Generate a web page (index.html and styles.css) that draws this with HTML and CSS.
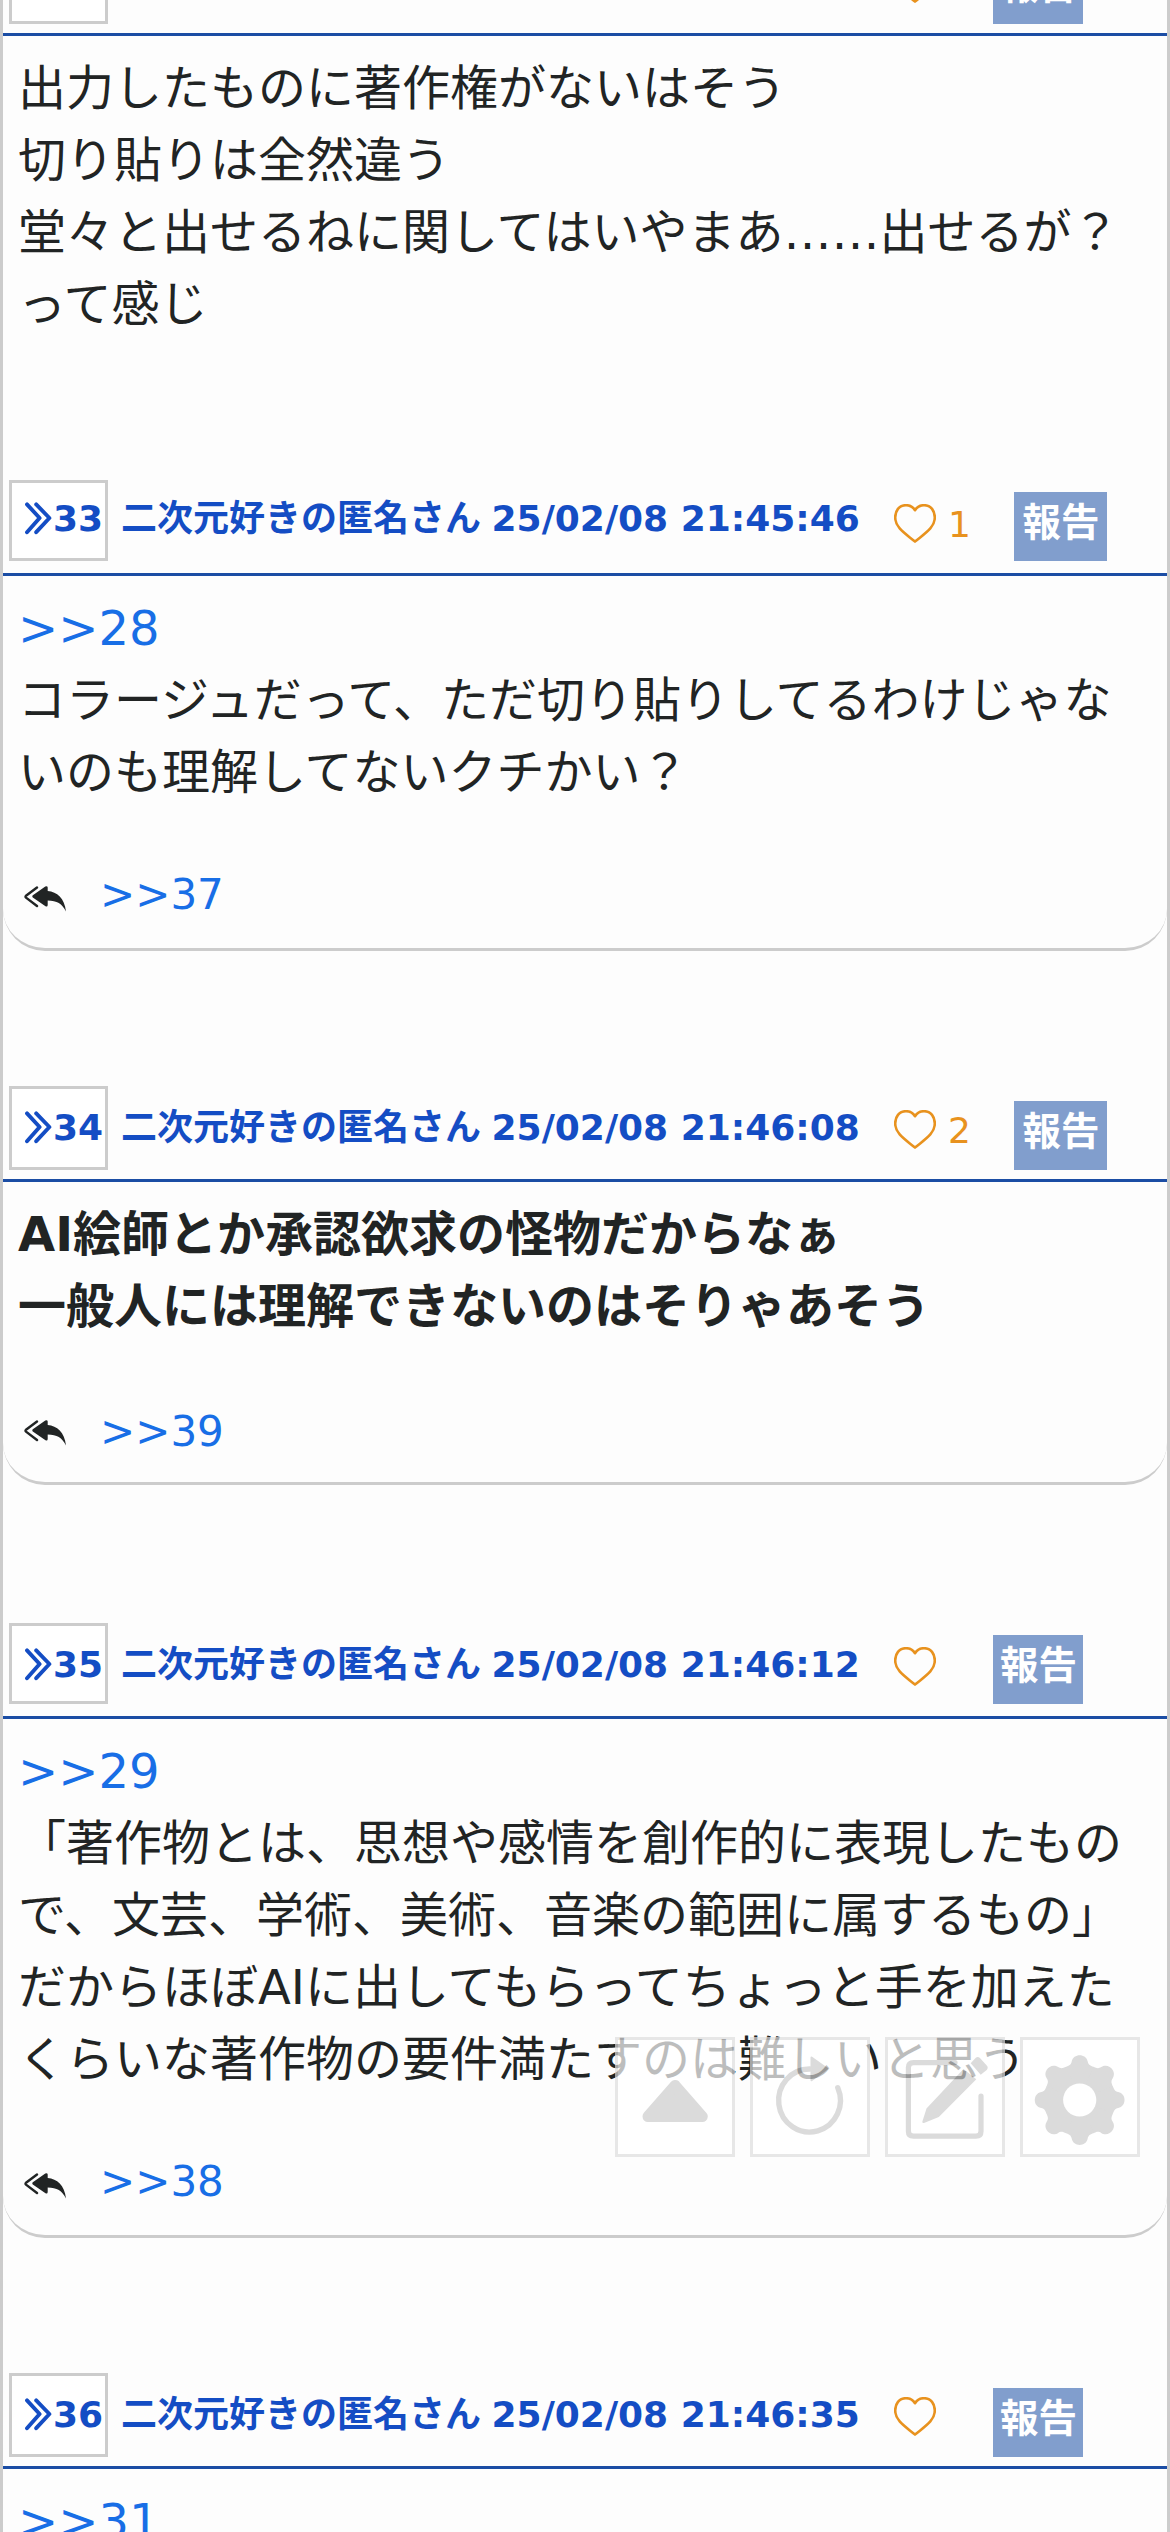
FILE: index.html
```html
<!DOCTYPE html>
<html lang="ja">
<head>
<meta charset="utf-8">
<title>スレッド</title>
<link rel="stylesheet" href="styles.css">
</head>
<body>
<svg class="defs" aria-hidden="true">
  <symbol id="chevrons" viewBox="0 0 28 34"><path d="M3 3.4 15.6 17 3 31.2M12.2 3.4 25.4 17 12.2 31.2" fill="none" stroke="currentColor" stroke-width="3.9" stroke-linecap="round" stroke-linejoin="round"/></symbol>
  <symbol id="heart" viewBox="0 0 42 39"><path d="M21 6.2C18.5 2.2 15.5 1.2 12 1.2 5 1.2 1.2 7 1.2 13.5 1.2 24 12 30 21 37.6 30 30 40.8 24 40.8 13.5 40.8 7 37 1.2 30 1.2 26.5 1.2 23.5 2.2 21 6.2Z" fill="none" stroke="currentColor" stroke-width="2.6" stroke-linejoin="round"/></symbol>
  <symbol id="replies" viewBox="0 0 42 26"><path d="M13 1.5 2 9.8Q1 10.7 2 11.6L13 20" fill="none" stroke="currentColor" stroke-width="2.4" stroke-linecap="round"/><path d="M8.8 9.2 21.3.4Q23.5-.4 23.7 1.4V5C33 6 40.5 12 42 25.5 38 17.5 33 14.8 23.7 14.5V19Q23.5 21.2 21.5 20.2L8.800 11.6Q7.800 10.4 8.8 9.2Z" fill="currentColor"/></symbol>
</svg>
<main class="thread">
  <article class="post first">
    <header class="head tall">
      <a class="num"><svg class="chev"><use href="#chevrons"/></svg>32</a>
      <span class="name">二次元好きの匿名さん <span class="date">25/02/08 21:45:30</span></span>
      <span class="like"><svg class="heart"><use href="#heart"/></svg></span>
      <button class="report">報告</button>
    </header>
    <p class="text">出力したものに著作権がないはそう<br>切り貼りは全然違う<br>堂々と出せるねに関してはいやまあ……出せるが？<br>って感じ</p>
  </article>

  <article class="post card">
    <header class="head high">
      <a class="num"><svg class="chev"><use href="#chevrons"/></svg>33</a>
      <span class="name">二次元好きの匿名さん <span class="date">25/02/08 21:45:46</span></span>
      <span class="like counted"><svg class="heart"><use href="#heart"/></svg>1</span>
      <button class="report wide">報告</button>
    </header>
    <p class="text"><a class="link">&gt;&gt;28</a><br>コラージュだって、ただ切り貼りしてるわけじゃな<br>いのも理解してないクチかい？</p>
    <footer class="replies"><svg class="arrow"><use href="#replies"/></svg><a class="link">&gt;&gt;37</a></footer>
  </article>

  <article class="post card spaced">
    <header class="head tall">
      <a class="num"><svg class="chev"><use href="#chevrons"/></svg>34</a>
      <span class="name">二次元好きの匿名さん <span class="date">25/02/08 21:46:08</span></span>
      <span class="like counted"><svg class="heart"><use href="#heart"/></svg>2</span>
      <button class="report wide">報告</button>
    </header>
    <p class="text strong">AI絵師とか承認欲求の怪物だからなぁ<br>一般人には理解できないのはそりゃあそう</p>
    <footer class="replies low"><svg class="arrow"><use href="#replies"/></svg><a class="link">&gt;&gt;39</a></footer>
  </article>

  <article class="post card">
    <header class="head">
      <a class="num"><svg class="chev"><use href="#chevrons"/></svg>35</a>
      <span class="name">二次元好きの匿名さん <span class="date">25/02/08 21:46:12</span></span>
      <span class="like"><svg class="heart"><use href="#heart"/></svg></span>
      <button class="report">報告</button>
    </header>
    <p class="text"><a class="link">&gt;&gt;29</a><br>「著作物とは、思想や感情を創作的に表現したもの<br>で、文芸、学術、美術、音楽の範囲に属するもの」<br>だからほぼAIに出してもらってちょっと手を加えた<br>くらいな著作物の要件満たすのは難しいと思う</p>
    <footer class="replies"><svg class="arrow"><use href="#replies"/></svg><a class="link">&gt;&gt;38</a></footer>
  </article>

  <article class="post">
    <header class="head tall">
      <a class="num"><svg class="chev"><use href="#chevrons"/></svg>36</a>
      <span class="name">二次元好きの匿名さん <span class="date">25/02/08 21:46:35</span></span>
      <span class="like"><svg class="heart"><use href="#heart"/></svg></span>
      <button class="report">報告</button>
    </header>
    <p class="text"><a class="link">&gt;&gt;31</a></p>
  </article>
</main>

<nav class="tools">
  <button class="tool" aria-label="上へ"><svg viewBox="0 0 120 120"><path d="M33 79.5 60.2 48.5 87.3 79.5Z" fill="currentColor" stroke="currentColor" stroke-width="11" stroke-linejoin="round"/></svg></button>
  <button class="tool" aria-label="更新"><svg viewBox="0 0 120 120"><path d="M87.8 50.8A30.9 31.5 0 1 1 60 32" fill="none" stroke="currentColor" stroke-width="5.4" stroke-linecap="round"/><path d="M61.5 20.5 77 31.6 61.5 43.2Z" fill="currentColor" stroke="currentColor" stroke-width="2" stroke-linejoin="round"/></svg></button>
  <button class="tool" aria-label="書き込む"><svg viewBox="0 0 120 120"><path d="M70 25.6H28.5Q23.4 25.6 23.4 30.6V94.2Q23.4 99.2 28.5 99.2H91Q96 99.2 96 94.2V59" fill="none" stroke="currentColor" stroke-width="5.2" stroke-linecap="round"/><path d="M37.4 84.5 41.5 71.5 78.5 32 91.3 42.3 53.8 80 39 86Q37 86.5 37.4 84.5ZM85.7 26.3 90.8 20.8Q92.7 19.2 94.7 20.8L101.7 28.5Q103.7 30.7 101.7 33L95.7 37.7Z" fill="currentColor"/></svg></button>
  <button class="tool" aria-label="設定"><svg viewBox="0 0 120 120"><g fill="currentColor" transform="translate(59.7 63)"><circle r="34"/>
    <path id="cog" d="M0 0-14-33C-10.5-34.5-8.8-35-8-38.5-6.5-47 6.5-47 8-38.5 8.8-35 10.5-34.5 14-33Z"/>
    <use href="#cog" transform="rotate(45)"/><use href="#cog" transform="rotate(90)"/><use href="#cog" transform="rotate(135)"/><use href="#cog" transform="rotate(180)"/><use href="#cog" transform="rotate(225)"/><use href="#cog" transform="rotate(270)"/><use href="#cog" transform="rotate(315)"/>
    <circle r="16.6" fill="#fff"/></g></svg></button>
</nav>
</body>
</html>
```
FILE: styles.css
```css
* { box-sizing: border-box; }

html, body { margin: 0; height: 2532px; overflow: hidden; }

body {
  background: #fdfdfd;
  color: #212424;
  font-family: "DejaVu Sans", "Noto Sans CJK JP", sans-serif;
}

.defs { display: none; }

.thread {
  height: 2532px;
  overflow: hidden;
  border: solid #ccc;
  border-width: 0 3px;
}

.post { margin-bottom: 135px; }
.post.spaced { margin-bottom: 138px; }
.post.first { margin-top: -60px; margin-bottom: 140px; }
.post.card {
  border-bottom: 3px solid #ccc;
  border-radius: 0 0 42px 42px;
}

.head {
  display: flex;
  align-items: flex-start;
  height: 96px;
  padding-left: 6px;
  border-bottom: 3px solid #1b4da4;
  color: #144dc4;
  font-size: 36px;
  font-weight: bold;
  line-height: 42px;
  white-space: nowrap;
}

.num {
  display: flex;
  width: 99px;
  height: 81px;
  padding: 18px 0 0 12px;
  border: 3px solid #ccc;
  background: #fff;
}
.chev { width: 28px; height: 34px; margin: 3px 1px 0 0; }
.name { width: 786px; padding: 21px 0 0 13px; }
.date { margin-left: -2px; }

.tall .num { height: 84px; }
.high .num { padding-top: 15px; }
.high .name { padding-top: 18px; }

.like {
  display: flex;
  width: 99px;
  padding-top: 24px;
  color: #e8921e;
  font-weight: normal;
}
.like.counted { width: 120px; }
.heart { width: 42px; height: 39px; margin-right: 12px; }

.report {
  width: 90px;
  height: 69px;
  margin: 12px 0 0;
  padding: 0 0 8px 1px;
  border: 0;
  background: #819ecd;
  color: #fff;
  font: bold 38.5px/54px "DejaVu Sans", "Noto Sans CJK JP", sans-serif;
}
.report.wide { width: 93px; }
.tall .report { margin-top: 15px; }

.text {
  margin: 0;
  padding: 16px 0 0 15px;
  font-size: 48px;
  line-height: 72px;
  white-space: nowrap;
}
.strong { font-weight: bold; }
.link { color: #186ee6; }

.replies {
  display: flex;
  align-items: flex-start;
  height: 140px;
  padding: 62px 0 0 21px;
  font-size: 42px;
  line-height: 48px;
}
.arrow { width: 42px; height: 26px; margin: 16px 34px 0 0; }
.replies .link { padding-top: 1px; }
.replies.low .link { padding-top: 4px; }

.tools {
  position: fixed;
  left: 615px;
  top: 2037px;
  display: flex;
  gap: 15px;
  opacity: .7;
}
.tool {
  width: 120px;
  height: 120px;
  padding: 0;
  border: 3px solid #ddd;
  background: #fff;
  color: #ccc;
}
.tool svg { display: block; width: 120px; height: 120px; margin: -3px; }
```
